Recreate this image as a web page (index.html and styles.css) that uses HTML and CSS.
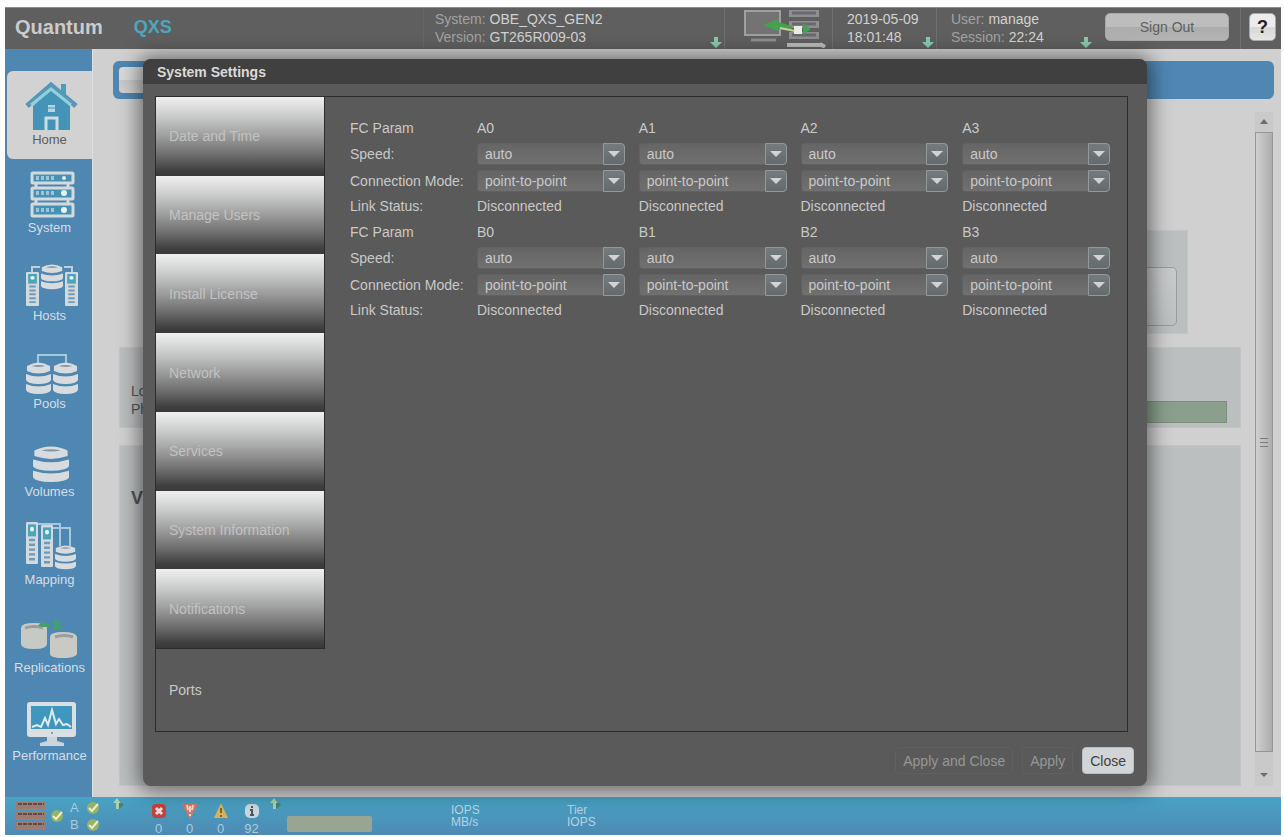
FILE: index.html
```html
<!DOCTYPE html>
<html lang="en">
<head>
<meta charset="utf-8">
<title>Quantum QXS - System Settings</title>
<link rel="stylesheet" href="styles.css">
</head>
<body>
<svg class="defs" aria-hidden="true">
  <symbol id="disk" viewBox="0 0 26 33" preserveAspectRatio="none">
    <path d="M1 4 Q13 -3 25 4 V9 Q13 14 1 9Z M0 12 Q13 17 26 12 V18 Q24 22 13 22 Q2 22 0 18Z M0 22 Q13 27 26 22 V28 Q24 32 13 32 Q2 32 0 28Z" fill="#d9dcde"/>
    <path d="M6 4 Q13 2 20 4 Q13 6 6 4Z" fill="#8696a0"/>
  </symbol>
  <symbol id="tower" viewBox="0 0 12 35" preserveAspectRatio="none">
    <rect width="12" height="35" rx="1" fill="#d3dade"/>
    <rect x="2" y="2" width="8" height="10" fill="#4ba5b8"/>
    <circle cx="6" cy="6" r="2" fill="#e8f4f4"/>
    <path d="M3 15h6M3 19h6M3 23h6M3 27h6M3 31h6" stroke="#6f9ab8" stroke-width="2"/>
  </symbol>
  <symbol id="down" viewBox="0 0 12 13">
    <path d="M4 1h4v5h4l-6 6-6-6h4z" fill="#86c9ad"/>
  </symbol>
  <symbol id="check" viewBox="0 0 14 14">
    <circle cx="7" cy="7" r="6" fill="#92b36a"/>
    <path d="M3 7l3 3 6-7" fill="none" stroke="#f2ecc8" stroke-width="2"/>
  </symbol>
  <symbol id="pointer" viewBox="0 0 12 14">
    <path d="M6 2l6 6-5 4z" fill="#4c7f70"/>
    <path d="M5 1l4 5H7v6H4V6H1z" fill="#a5d3ac"/>
  </symbol>
</svg>

<header class="topbar">
  <div class="brand"><span class="brand-name">Quantum</span><span class="brand-product">QXS</span></div>
  <div class="info info-system">
    <dl>
      <dt>System:</dt><dd>OBE_QXS_GEN2</dd>
      <dt>Version:</dt><dd>GT265R009-03</dd>
    </dl>
    <svg class="down" width="12" height="13"><use href="#down"/></svg>
  </div>
  <div class="info info-link">
    <svg width="84" height="40" viewBox="0 0 84 40">
      <rect x="2" y="3" width="35" height="24" fill="#737373" stroke="#a0a0a0" stroke-width="2"/>
      <path d="M8 32h25" stroke="#8d8d8d" stroke-width="3"/>
      <path d="M46 2h30v7H46zM46 13h30v7H46zM46 24h30v7H46z" fill="#8f8f8f"/>
      <path d="M49 5h24M49 16h24M49 27h24" stroke="#6b6874" stroke-width="3"/>
      <path d="M44 37h34M77 36l5 3" stroke="#b9b9b9" stroke-width="4"/>
      <path d="M20 17l15-6v3l14 4v5l-14-2v2z" fill="#43a24b"/>
      <path d="M37 20l15 3" stroke="#c6cf9e" stroke-width="2"/>
      <path d="M60 15l8 6-8 6z" fill="#43a24b"/>
      <rect x="51" y="18" width="8" height="8" fill="#e6efdf"/>
    </svg>
  </div>
  <div class="info info-date">
    <p class="clock">2019-05-09<br>18:01:48</p>
    <svg class="down" width="12" height="13"><use href="#down"/></svg>
  </div>
  <div class="info info-user">
    <dl>
      <div><dt>User:</dt><dd>manage</dd></div>
      <div><dt>Session:</dt><dd>22:24</dd></div>
    </dl>
    <svg class="down" width="12" height="13"><use href="#down"/></svg>
  </div>
  <div class="signout"><button type="button" class="btn-signout">Sign Out</button></div>
  <div class="help"><button type="button" class="btn-help">?</button></div>
</header>

<main class="main">
  <nav class="sidebar">
    <a class="nav-item active" href="#home">
      <svg width="60" height="52" viewBox="-4 0 60 52">
        <path d="M37 4h5v16l-5-5z" fill="#4a9dbb"/>
        <path d="M9 26L27 10 46 26V50H9z" fill="#4593b8"/>
        <path d="M3 26L27 5 52 26" fill="none" stroke="#5796b5" stroke-width="5"/>
        <path d="M7 25L27 9 47 25" fill="none" stroke="#8ed3dc" stroke-width="3"/>
        <path d="M22 50V38h11v12" fill="none" stroke="#c9dde2" stroke-width="3"/>
        <path d="M24 25h7v7h-7z" fill="#b5d5df"/><path d="M24 28h7" stroke="#4593b8"/>
      </svg>
      <span>Home</span>
    </a>
    <a class="nav-item" href="#system">
      <svg width="60" height="52" viewBox="-4 0 60 52">
        <path d="M12 14v26M44 14v26" stroke="#d3dade" stroke-width="3"/>
        <g fill="#4792b4" stroke="#d3dade" stroke-width="3">
          <rect x="8" y="5" width="41" height="10" rx="1"/><rect x="8" y="20" width="41" height="11" rx="1"/><rect x="8" y="36" width="41" height="12" rx="1"/>
        </g>
        <path d="M12 10h19M12 25h19M12 42h19" stroke="#9dc5d6" stroke-width="4" stroke-dasharray="3 2"/>
        <g fill="#e4f3f3"><circle cx="40" cy="10" r="2"/><circle cx="40" cy="25" r="3"/><circle cx="40" cy="42" r="3"/></g>
      </svg>
      <span>System</span>
    </a>
    <a class="nav-item" href="#hosts">
      <svg width="60" height="52" viewBox="-4 0 60 52">
        <path d="M8 17v-6h40v6" fill="none" stroke="#b9cfdb" stroke-width="2"/>
        <rect x="16" y="8" width="24" height="26" fill="#5089b3"/>
        <use href="#disk" x="17" y="8" width="22" height="26"/>
        <use href="#tower" x="2" y="16" width="13" height="34"/>
        <use href="#tower" x="41" y="16" width="13" height="34"/>
      </svg>
      <span>Hosts</span>
    </a>
    <a class="nav-item" href="#pools">
      <svg width="60" height="52" viewBox="-4 0 60 52">
        <path d="M14 19v-8h28v8" fill="none" stroke="#a5c9dc" stroke-width="2"/>
        <use href="#disk" x="2" y="18" width="25" height="33"/>
        <use href="#disk" x="29" y="18" width="25" height="33"/>
      </svg>
      <span>Pools</span>
    </a>
    <a class="nav-item" href="#volumes">
      <svg width="60" height="52" viewBox="-4 0 60 52">
        <use href="#disk" x="9" y="14" width="36" height="37"/>
      </svg>
      <span>Volumes</span>
    </a>
    <a class="nav-item" href="#mapping">
      <svg width="60" height="52" viewBox="-4 0 60 52">
        <path d="M14 4h22v22M28 8h18v18" fill="none" stroke="#a5c9dc" stroke-width="2"/>
        <use href="#tower" x="2" y="2" width="12" height="42"/>
        <use href="#tower" x="17" y="5" width="12" height="42"/>
        <use href="#disk" x="31" y="25" width="21" height="25"/>
      </svg>
      <span>Mapping</span>
    </a>
    <a class="nav-item" href="#replications">
      <svg width="60" height="52" viewBox="-4 0 60 52">
        <path d="M-3 20q0-5 13-5t13 5v16q0 5-13 5t-13-5z" fill="#c7c9c5"/>
        <path d="M1 20q9-3 18 0" fill="none" stroke="#9a9e9a" stroke-width="3"/>
        <path d="M26 29q0-5 13-5t14 5v16q0 5-14 5t-13-5z" fill="#c9cac6"/>
        <path d="M31 29q9-3 18 0" fill="none" stroke="#9a9e9a" stroke-width="3"/>
        <path d="M14 18l6-7v4l5 1v3h-6zM29 11l7 3 1 8-9-1 3-3z" fill="#43a06a"/>
      </svg>
      <span>Replications</span>
    </a>
    <a class="nav-item" href="#performance">
      <svg width="60" height="52" viewBox="-4 0 60 52">
        <rect x="3" y="6" width="49" height="35" rx="3" fill="#d9dfe2"/>
        <rect x="7" y="10" width="41" height="23" fill="#3f97bd"/>
        <path d="M8 31l5-2 4 2 4-9 3 7 4-15 4 14 3-5 4 6 4-1 4 3" fill="none" stroke="#dfecee" stroke-width="2"/>
        <circle cx="28" cy="37" r="1" fill="#7a868c"/>
        <path d="M23 41h10v4l7 2v3H16v-3l7-2z" fill="#ccd5da"/>
      </svg>
      <span>Performance</span>
    </a>
  </nav>

  <section class="content">
    <div class="toolbar"><div class="toolbar-field"></div></div>
    <div class="page">
      <div class="cards">
        <div class="card card-summary"><div class="card-inner"></div></div>
        <div class="card card-usage">
          <p>Lo<br>Ph</p>
          <div class="usage-bar"></div>
        </div>
        <div class="card card-details"><h2>V</h2></div>
      </div>
      <div class="scrollbar">
        <svg width="18" height="20" viewBox="0 0 18 20"><path d="M5 12l4-5 4 5z" fill="#6d6d6d"/></svg>
        <div class="thumb"><i></i></div>
        <svg width="18" height="34" viewBox="0 0 18 34"><path d="M5 21l4 4 4-4z" fill="#6d6d6d"/></svg>
      </div>
    </div>

    <div class="dialog" role="dialog" aria-labelledby="dialog-title">
      <h1 class="dialog-title" id="dialog-title">System Settings</h1>
      <div class="dialog-body">
        <div class="tabs">
          <button type="button" class="tab">Date and Time</button>
          <button type="button" class="tab">Manage Users</button>
          <button type="button" class="tab">Install License</button>
          <button type="button" class="tab">Network</button>
          <button type="button" class="tab">Services</button>
          <button type="button" class="tab">System Information</button>
          <button type="button" class="tab">Notifications</button>
          <button type="button" class="tab selected">Ports</button>
        </div>
        <form class="ports">
          <div class="port-grid">
            <span>FC Param</span><span>A0</span><span>A1</span><span>A2</span><span>A3</span>
            <span>Speed:</span>
            <label class="pick"><select aria-label="A0 speed"><option>auto</option></select></label>
            <label class="pick"><select aria-label="A1 speed"><option>auto</option></select></label>
            <label class="pick"><select aria-label="A2 speed"><option>auto</option></select></label>
            <label class="pick"><select aria-label="A3 speed"><option>auto</option></select></label>
            <span>Connection Mode:</span>
            <label class="pick"><select aria-label="A0 connection mode"><option>point-to-point</option></select></label>
            <label class="pick"><select aria-label="A1 connection mode"><option>point-to-point</option></select></label>
            <label class="pick"><select aria-label="A2 connection mode"><option>point-to-point</option></select></label>
            <label class="pick"><select aria-label="A3 connection mode"><option>point-to-point</option></select></label>
            <span>Link Status:</span><span>Disconnected</span><span>Disconnected</span><span>Disconnected</span><span>Disconnected</span>
          </div>
          <div class="port-grid">
            <span>FC Param</span><span>B0</span><span>B1</span><span>B2</span><span>B3</span>
            <span>Speed:</span>
            <label class="pick"><select aria-label="B0 speed"><option>auto</option></select></label>
            <label class="pick"><select aria-label="B1 speed"><option>auto</option></select></label>
            <label class="pick"><select aria-label="B2 speed"><option>auto</option></select></label>
            <label class="pick"><select aria-label="B3 speed"><option>auto</option></select></label>
            <span>Connection Mode:</span>
            <label class="pick"><select aria-label="B0 connection mode"><option>point-to-point</option></select></label>
            <label class="pick"><select aria-label="B1 connection mode"><option>point-to-point</option></select></label>
            <label class="pick"><select aria-label="B2 connection mode"><option>point-to-point</option></select></label>
            <label class="pick"><select aria-label="B3 connection mode"><option>point-to-point</option></select></label>
            <span>Link Status:</span><span>Disconnected</span><span>Disconnected</span><span>Disconnected</span><span>Disconnected</span>
          </div>
        </form>
      </div>
      <div class="dialog-actions">
        <button type="button" class="btn" disabled>Apply and Close</button>
        <button type="button" class="btn" disabled>Apply</button>
        <button type="button" class="btn btn-close">Close</button>
      </div>
    </div>
  </section>
</main>

<footer class="status">
  <div class="health">
    <svg width="32" height="30" viewBox="0 0 32 30">
      <path d="M1 1h29v7H1zM1 11h29v7H1zM1 21h29v7H1z" fill="#9a7d72"/>
      <path d="M3 3h26M3 13h26M3 23h26" stroke="#5d4a48" stroke-width="2" stroke-dasharray="4 1"/>
      <path d="M0 8h31M0 18h31M0 28h31" stroke="#b9776a" stroke-width="1"/>
    </svg>
    <svg width="14" height="14"><use href="#check"/></svg>
    <div class="controllers">
      <span>A</span><svg width="14" height="14"><use href="#check"/></svg>
      <span>B</span><svg width="14" height="14"><use href="#check"/></svg>
    </div>
    <svg class="pointer" width="12" height="14"><use href="#pointer"/></svg>
  </div>
  <div class="alerts">
    <div class="alert"><svg width="16" height="16" viewBox="0 0 16 16"><rect x="1" y="1" width="14" height="14" rx="4" fill="#c4423f"/><path d="M5 5l6 6M11 5l-6 6" stroke="#f5dcda" stroke-width="3"/></svg><span>0</span></div>
    <div class="alert"><svg width="16" height="16" viewBox="0 0 16 16"><path d="M0 1h16L8 16z" fill="#d37766"/><path d="M5 2l1 5M11 2l-1 5M8 3v6M8 11v2" stroke="#f0d5cd" stroke-width="2"/></svg><span>0</span></div>
    <div class="alert"><svg width="16" height="16" viewBox="0 0 16 16"><path d="M8 0l7 15H1z" fill="#dcb258"/><path d="M8 5v5M8 12v2" stroke="#7d6637" stroke-width="2"/></svg><span>0</span></div>
    <div class="alert"><svg width="16" height="16" viewBox="0 0 16 16"><rect x="1" y="1" width="14" height="14" rx="5" fill="#c8d6de"/><path d="M8 3v2M6 7h2v5M6 12h4" fill="none" stroke="#54545f" stroke-width="2"/></svg><span>92</span></div>
  </div>
  <svg class="pointer" width="12" height="14"><use href="#pointer"/></svg>
  <div class="capacity"></div>
  <p class="metric">IOPS<br>MB/s</p>
  <p class="metric">Tier<br>IOPS</p>
</footer>
</body>
</html>
```
FILE: styles.css
```css
*, *::before { box-sizing: border-box; }

body {
  margin: 0;
  min-height: 100vh;
  padding: 7px 3px 2px 5px;
  display: flex;
  flex-direction: column;
  background: #fdfdfd;
  color: #c9c9c9;
  font: 14px/18px "Liberation Sans", Arial, sans-serif;
}

button, select { font: inherit; color: inherit; }
p, h1, h2, dl, dd { margin: 0; }
svg { display: block; flex: none; }
.defs { position: absolute; width: 0; height: 0; }

/* Top bar */
.topbar {
  flex: none;
  height: 42px;
  display: flex;
  background: #5f5f5f;
  border-top: 1px solid #8c8c8c;
}
.brand {
  flex: 1;
  display: flex;
  align-items: center;
  gap: 31px;
  padding: 0 10px 3px;
  font-weight: bold;
}
.brand-name { font-size: 20px; color: #cbcbcb; }
.brand-product { font-size: 18px; color: #4ea5bd; }
.info {
  display: flex;
  justify-content: space-between;
  padding: 2px 2px 0 14px;
  border-right: 1px solid #707070;
}
.info dl {
  display: grid;
  grid-template-columns: auto auto;
  column-gap: 4px;
  justify-content: start;
  align-content: start;
}
.info dt { color: #a3a3a3; }
.info dd, .clock { color: #d2d2d2; }
.info .down { align-self: flex-end; }
.info-system { width: 302px; border-left: 1px solid #666; padding-left: 11px; }
.info-link { width: 108px; padding: 0 0 0 18px; }
.info-date { width: 104px; }
.info-user { width: 157px; border-right: 0; }
.info-user dl { grid-template-columns: auto; }
.info-user dl div { display: flex; gap: 4px; }
.signout { padding: 5px 11px 0; border-right: 1px solid #707070; }
.help { padding: 5px 5px 0 8px; }
.btn-signout, .btn-help {
  height: 28px;
  padding: 0;
  border: 1px solid #a9a9a9;
  border-radius: 5px;
}
.btn-signout {
  width: 124px;
  background: linear-gradient(#bdbdbd 48%, #acacac 52%, #b4b4b4);
  color: #606060;
}
.btn-help {
  width: 27px;
  background: linear-gradient(#ececec 48%, #d8d8d8 52%, #e6e6e6);
  color: #222;
  font-size: 18px;
  font-weight: bold;
}

/* Main area */
.main { flex: 1; display: flex; }
.sidebar {
  flex: none;
  width: 87px;
  padding: 22px 0 0 2px;
  background: #4f87b3;
}
.nav-item {
  height: 88px;
  padding-top: 9px;
  display: flex;
  flex-direction: column;
  align-items: center;
  color: #d5dee5;
  font-size: 13px;
  line-height: 16px;
  text-decoration: none;
}
.nav-item.active {
  background: #d2d2d2;
  border-radius: 6px 0 0 6px;
  color: #5c5c5c;
}
.content {
  flex: 1;
  position: relative;
  display: flex;
  flex-direction: column;
  padding: 12px 7px 11px 20px;
  background: #d0d0d0;
  border-left: 1px solid #dedede;
}
.toolbar {
  height: 38px;
  padding: 6px;
  border-radius: 6px;
  background: #4f87b3;
}
.toolbar-field {
  width: 200px;
  height: 26px;
  border-radius: 4px;
  background: linear-gradient(#d9d9d9 48%, #c8c8c8 52%, #d2d2d2);
}
.page { flex: 1; display: flex; justify-content: space-between; padding: 13px 1px 0 6px; }
.cards {
  flex: 1;
  display: flex;
  flex-direction: column;
  margin-right: 14px;
  padding-top: 118px;
}
.card { background: #bcbfc0; border: 1px solid #c3c4c4; color: #555; }
.card-summary { height: 104px; margin: 0 53px; padding: 36px 10px 7px; }
.card-inner {
  height: 100%;
  border: 1px solid #989c9e;
  border-radius: 5px;
  background: linear-gradient(#c9cbcb, #bcc0c2);
}
.card-usage {
  height: 81px;
  margin: 13px 0 17px;
  padding: 34px 13px 4px 11px;
  display: flex;
  gap: 20px;
}
.usage-bar {
  flex: 1;
  height: 22px;
  margin-top: 19px;
  border: 1px solid #7c8c7e;
  background: #8aa08c;
}
.card-details { flex: 1; padding: 42px 11px; }
.card-details h2 { font-size: 18px; line-height: 20px; }
.scrollbar { display: flex; flex-direction: column; width: 18px; background: #c9c9c9; }
.thumb {
  flex: 1;
  display: flex;
  align-items: center;
  justify-content: center;
  border: 1px solid #959595;
  background: linear-gradient(90deg, #cfcfcf, #adadad);
}
.thumb i {
  width: 8px;
  height: 9px;
  background: repeating-linear-gradient(#7c7c7c 0 1px, transparent 1px 4px);
}

/* Dialog */
.dialog {
  position: absolute;
  top: 10px;
  right: 134px;
  bottom: 11px;
  left: 50px;
  display: flex;
  flex-direction: column;
  border-radius: 8px;
  background: #5a5a5a;
  box-shadow: 0 1px 20px 4px rgba(0, 0, 0, .5);
}
.dialog-title {
  padding: 4px 14px 3px;
  border-radius: 8px 8px 0 0;
  background: #404040;
  color: #dadada;
  font-size: 14px;
  line-height: 18px;
}
.dialog-body {
  flex: 1;
  display: flex;
  margin: 12px 19px 0 12px;
  border: 1px solid #2c2c2c;
}
.tabs { width: 169px; display: flex; flex-direction: column; }
.tab {
  flex: 1;
  padding: 0 13px;
  border: 0;
  border-right: 1px solid #2c2c2c;
  background: linear-gradient(#f0f0f0, #c9cbcb 25%, #989898 52%, #6c6c6c 74%, #404040 93%, #383838);
  color: #c2c2c2;
  text-align: left;
}
.tab.selected {
  flex: none;
  height: 83px;
  border-right: 0;
  border-top: 1px solid #2c2c2c;
  background: none;
  color: #c9c9c9;
}
.ports { flex: 1; padding: 19px 3px 0 25px; }
.port-grid {
  display: grid;
  grid-template-columns: 127px repeat(4, 1fr);
  grid-template-rows: 24px 27px 28px 22px;
  align-items: center;
  margin-bottom: 3px;
}
.pick { position: relative; display: block; height: 22px; margin-right: 14px; }
.pick select {
  display: block;
  width: 100%;
  height: 22px;
  padding: 0 24px 0 7px;
  appearance: none;
  border: 1px solid #616161;
  border-radius: 3px;
  background: linear-gradient(#656565, #707070);
}
.pick::before {
  content: "";
  position: absolute;
  top: 0;
  right: 0;
  width: 22px;
  height: 22px;
  border: 1px solid #92999b;
  border-radius: 0 4px 4px 0;
  background: linear-gradient(#747b7e, #656a6c);
  pointer-events: none;
}
.pick::after {
  content: "";
  position: absolute;
  top: 8px;
  right: 5px;
  border: 6px solid transparent;
  border-top-color: #d2d2d2;
  border-bottom: 0;
  pointer-events: none;
}
.dialog-actions {
  display: flex;
  justify-content: flex-end;
  gap: 9px;
  padding: 15px 13px 12px;
}
.btn {
  height: 27px;
  padding: 0 7px;
  border: 1px solid #606060;
  border-radius: 4px;
  background: none;
  color: #969696;
}
.btn-close { border-color: #b8bcbf; background: #d2d5d8; color: #404040; }

/* Status bar */
.status {
  flex: none;
  height: 38px;
  display: flex;
  background: linear-gradient(#48a3c4, #4d8ab4);
  color: #a9cbdc;
  font-size: 12px;
  line-height: 12px;
}
.health { width: 138px; padding-left: 10px; display: flex; align-items: center; gap: 3px; }
.controllers {
  display: grid;
  grid-template-columns: 12px 14px;
  grid-auto-rows: 16px;
  align-items: center;
  gap: 1px 4px;
  padding-left: 3px;
  font-size: 13px;
}
.pointer { align-self: flex-start; }
.health .pointer { margin-left: 9px; }
.alerts { display: flex; margin-right: 2px; }
.alert {
  width: 31px;
  padding-top: 6px;
  display: flex;
  flex-direction: column;
  align-items: center;
  gap: 4px;
  font-size: 13px;
}
.capacity {
  width: 85px;
  height: 16px;
  margin: 19px 79px 0 6px;
  border-radius: 2px;
  background: #98a592;
}
.metric { width: 116px; padding-top: 7px; color: #b7d3e1; }
```
